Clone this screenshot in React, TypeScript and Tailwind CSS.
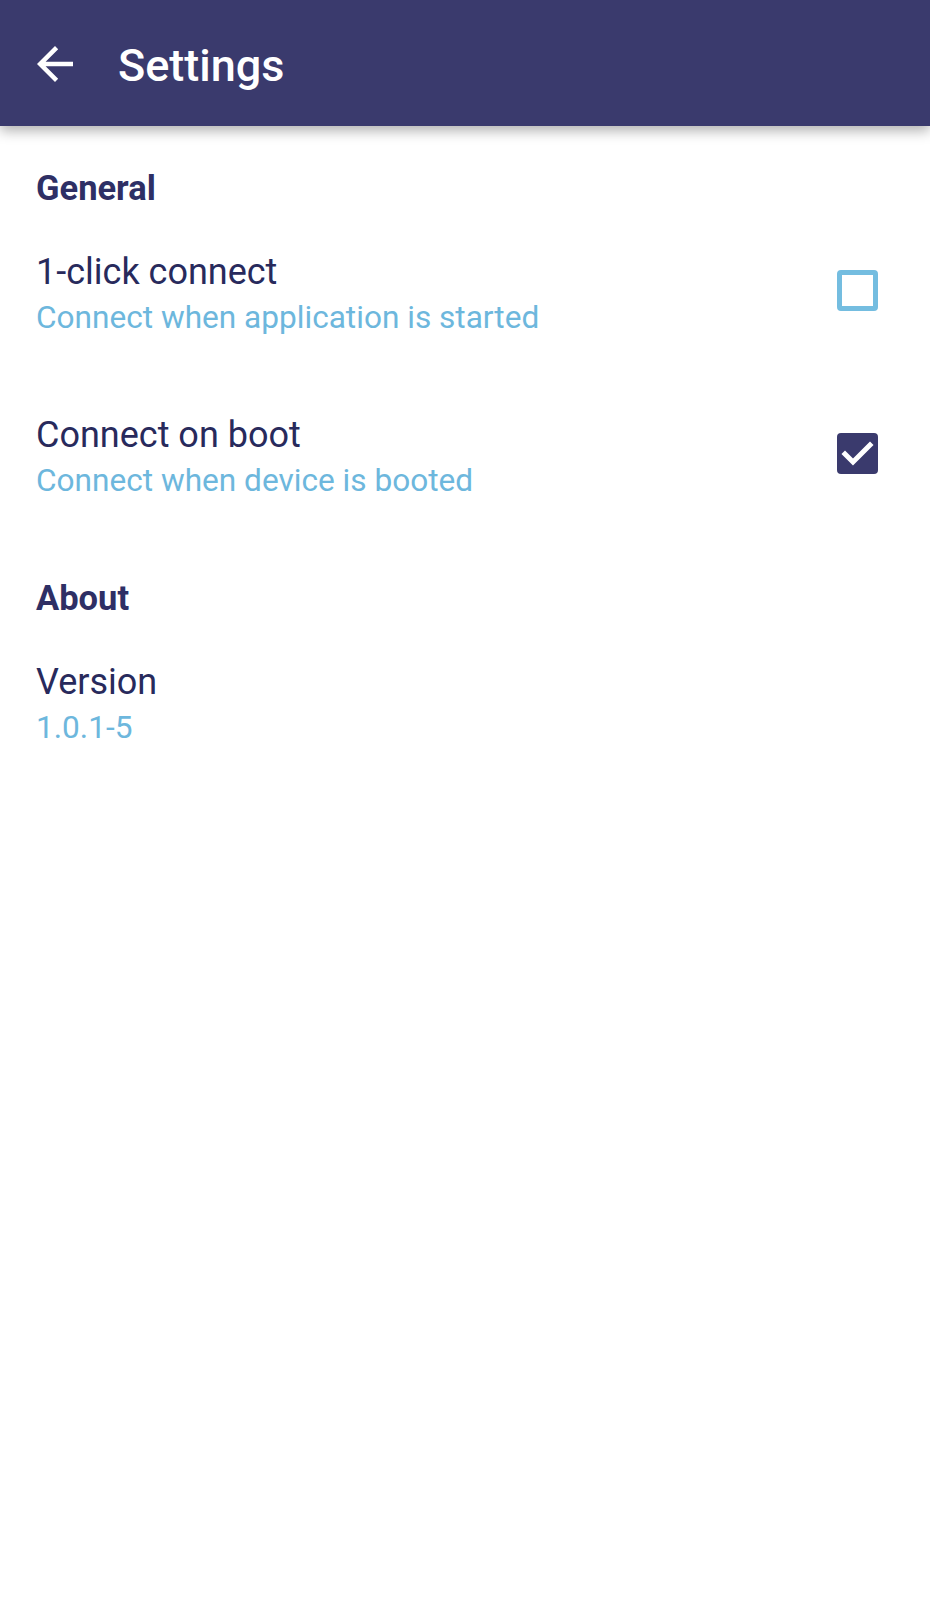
import React from 'react'

type RowProps = {
  title: string
  summary: string
  checked?: boolean
}

const Category = ({ label }: { label: string }) => (
  <div className="pt-[40px] pb-[4px]">
    <div className="text-[34.5px] leading-[40px] font-bold text-[#2e2f65]">{label}</div>
  </div>
)

const CheckBox = ({ checked }: { checked: boolean }) =>
  checked ? (
    <div className="w-[41px] h-[41px] rounded-[4px] bg-[#3a3a6d] flex items-center justify-center">
      <svg width="41" height="41" viewBox="0 0 41 41">
        <polyline points="8,21 16,29 33,12" fill="none" stroke="#ffffff" strokeWidth="5" strokeLinecap="square" />
      </svg>
    </div>
  ) : (
    <div className="w-[41px] h-[41px] rounded-[4px] border-[5px] border-[#74bde0] bg-white" />
  )

const PrefRow = (props: RowProps) => {
  const { title, summary, checked } = props
  return (
    <div className="flex items-center justify-between pt-[36px] pb-[35px]">
      <div>
        <div className="text-[36px] leading-[48px] text-[#282a5c]">{title}</div>
        <div className="text-[31.6px] leading-[44px] text-[#6db7dd]">{summary}</div>
      </div>
      {checked !== undefined && (
        <div className="mr-[16px] mb-[7px]">
          <CheckBox checked={checked} />
        </div>
      )}
    </div>
  )
}

export default function App() {
  return (
    <div className="w-[930px] min-h-[1600px] bg-white font-['Roboto',sans-serif]">
      <header className="relative z-10 h-[126px] bg-[#3a3a6d] flex items-start px-[28px] shadow-[0_5px_12px_rgba(0,0,0,0.3)]">
        <svg className="mt-[37px]" width="54" height="54" viewBox="0 0 24 24" fill="#ffffff">
          <path d="M20 11H7.83l5.59-5.59L12 4l-8 8 8 8 1.41-1.41L7.83 13H20v-2z" />
        </svg>
        <h1 className="ml-[36px] mt-[43px] text-[45px] leading-[45px] font-medium text-white">Settings</h1>
      </header>
      <main className="px-[36px] pt-[2px]">
        <Category label="General" />
        <PrefRow title="1-click connect" summary="Connect when application is started" checked={false} />
        <PrefRow title="Connect on boot" summary="Connect when device is booted" checked={true} />
        <Category label="About" />
        <PrefRow title="Version" summary="1.0.1-5" />
      </main>
    </div>
  )
}
